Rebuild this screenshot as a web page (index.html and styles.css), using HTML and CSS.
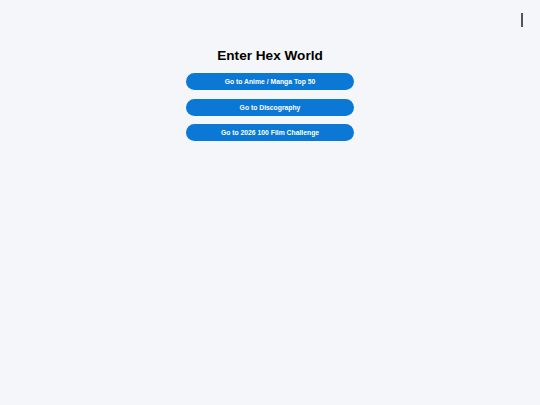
FILE: index.html
```html
<!DOCTYPE html>
<html lang="en">
<head>
  <meta charset="UTF-8" />
  <title>Hex World</title>
  <meta name="viewport" content="width=device-width, initial-scale=1.0" />
  <link rel="stylesheet" href="styles.css">
</head>
<body>
  <div class="caret"></div>
  <div class="wrapper">
    <h1>Enter Hex World</h1>
    <div class="links">
      <button class="btn">Go to Anime / Manga Top 50</button>
      <button class="btn">Go to Discography</button>
      <button class="btn">Go to 2026 100 Film Challenge</button>
    </div>
  </div>
</body>
</html>
```

FILE: styles.css
```css
body {
  background: #f4f6fa;
  font-family: "Liberation Sans", Arial, sans-serif;
  color: #000;
  margin: 0;
  min-height: 405px;
}

.caret {
  position: absolute;
  left: 521px;
  top: 13px;
  width: 1.5px;
  height: 14px;
  background: #555;
}

.wrapper {
  width: 168px;
  margin: 0 auto;
  padding-top: 48px;
  text-align: center;
}

h1 {
  font-size: 13.6px;
  font-weight: bold;
  margin: 0 0 9px;
  line-height: 16px;
}

.links {
  display: flex;
  flex-direction: column;
  gap: 8.5px;
}

.btn {
  display: block;
  width: 100%;
  height: 17px;
  padding: 0;
  border: none;
  border-radius: 9px;
  background: #0a78d4;
  color: #fff;
  font-family: "Liberation Sans", Arial, sans-serif;
  font-size: 6.8px;
  font-weight: bold;
}
```
